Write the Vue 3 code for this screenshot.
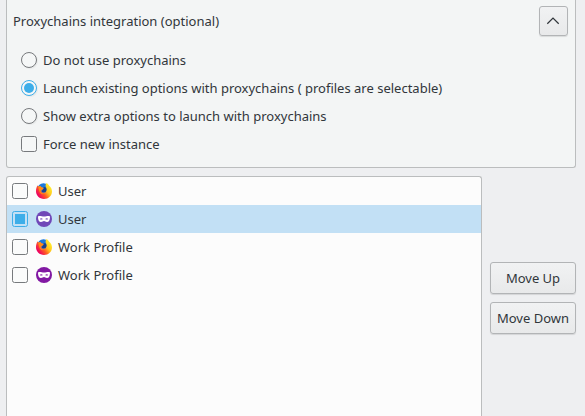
<script setup>
import { ref } from 'vue'

const modes = [
  'Do not use proxychains',
  'Launch existing options with proxychains ( profiles are selectable)',
  'Show extra options to launch with proxychains',
]
const mode = ref(1)
const force = ref(false)
const profiles = ref([
  { name: 'User', icon: 'firefox', checked: false },
  { name: 'User', icon: 'mask', color: '#7048b8', checked: true },
  { name: 'Work Profile', icon: 'firefox', checked: false },
  { name: 'Work Profile', icon: 'mask', color: '#8219a3', checked: false },
])
const current = ref(1)
</script>

<template>
  <main class="page">
    <section class="panel">
      <header class="head">
        <span>Proxychains integration (optional)</span>
        <button class="btn toggle">
          <svg width="15" height="10" viewBox="0 0 15 10"><path d="M1.300 7.800 7 2.100 12.700 7.800" fill="none" stroke="#31363b" stroke-width="1.250" /></svg>
        </button>
      </header>
      <div v-for="(m, i) in modes" :key="m" class="option" @click="mode = i">
        <span class="radio" :class="{ on: mode === i }"></span>{{ m }}
      </div>
      <div class="option" @click="force = !force">
        <span class="check" :class="{ on: force }"></span>Force new instance
      </div>
    </section>

    <div class="lower">
      <ul class="list">
        <li v-for="(p, i) in profiles" :key="i" class="row" :class="{ selected: current === i }" @click="current = i">
          <span class="check" :class="{ on: p.checked }" @click.stop="p.checked = !p.checked"></span>
          <svg v-if="p.icon === 'firefox'" class="icon" viewBox="0 0 16 16">
            <defs>
              <linearGradient :id="'fox' + i" x1=".9" y1=".15" x2=".1" y2=".75">
                <stop offset="0" stop-color="#fff22e" />
                <stop offset=".38" stop-color="#ffc41e" />
                <stop offset=".65" stop-color="#ff5a24" />
                <stop offset="1" stop-color="#ed0062" />
              </linearGradient>
            </defs>
            <circle cx="7.500" cy="6.500" r="6.200" fill="#1a78dc" />
            <path fill="#17408c" d="M6.500 5 9 4 11 6 10 9.500 6 9Z" />
            <path :fill="`url(#fox${i})`" d="M10.700 0C12 .9 12.600 1.800 12.900 2.600 14.800 4 16 6.200 16 8.500 16 12.700 12.500 16 8 16S0 12.700 0 8.300C0 6 .6 4 1.600 2.300L2.100 3.800C2.700 3.200 3.500 2.900 4.500 2.900 4.600 3.600 5.200 4.200 6 4.400L7.600 5C7.500 5.900 6.300 6.300 6 7L5 7.500C5.500 9.300 7 10 8.300 9.700 9.300 9.400 9.800 9.100 10 8.600 10.900 7.400 10.900 5.600 10.100 4.400 9.200 2.800 9.500 1 10.700 0Z" />
            <path fill="#ff8b18" d="M2.100 3.800C2.900 3.100 3.600 2.900 4.500 2.900 4.600 3.600 5.200 4.200 6 4.400L7.600 5C7.500 5.900 6.300 6.300 6 7L4.500 7.700C5 10.300 7.200 11.300 9.800 9.800 7.500 12.500 3.700 11 3.300 8Z" />
          </svg>
          <svg v-else class="icon" viewBox="0 0 16 16">
            <circle cx="8" cy="8" r="8" :fill="p.color" />
            <path fill="#fff" fill-rule="evenodd" d="M2 6C2 5.200 2.500 5 3.300 5 5.300 5 6.500 5.500 8 5.500S10.700 5 12.700 5C13.500 5 14 5.200 14 6 14 9 12.900 11 11 11 9.500 11 9 10 8 10S6.500 11 5 11C3.100 11 2 9 2 6ZM3.800 8Q5.300 9 6.800 8 5.200 6.600 3.800 8ZM9.200 8Q10.700 9 12.200 8 10.800 6.600 9.200 8Z" />
          </svg>
          <span class="name">{{ p.name }}</span>
        </li>
      </ul>
      <div class="actions">
        <button class="btn">Move Up</button>
        <button class="btn">Move Down</button>
      </div>
    </div>
  </main>
</template>

<style>
body { margin: 0; background: #eff0f1; }
</style>

<style scoped>
.page {
  box-sizing: border-box;
  height: 416px;
  padding: 0 9px 0 6px;
  overflow: hidden;
  display: flex;
  flex-direction: column;
  background: #eeeff1;
  color: #31363b;
  font: 13px/20px "Noto Sans", sans-serif;
  white-space: nowrap;
}
.panel {
  box-sizing: border-box;
  height: 168px;
  flex: none;
  border: 1px solid #bbbdbe;
  border-top: 0;
  border-radius: 0 0 3px 3px;
  background: #f3f5f5;
}
.head {
  display: flex;
  justify-content: space-between;
  align-items: center;
  height: 30px;
  padding: 6px 7px 10px 6px;
}
.option {
  display: flex;
  align-items: center;
  gap: 6px;
  height: 28px;
  padding-left: 14px;
}
.radio, .check {
  box-sizing: border-box;
  flex: none;
  width: 16px;
  height: 16px;
  border: 1px solid #777a7d;
  border-radius: 2.5px;
  background: #fafbfb;
  background-clip: padding-box;
}
.option .radio, .option .check { background-color: #f5f7f7; }
.radio { border-radius: 50%; box-shadow: 1px 1px 1px #0000000c; }
.on { border-color: #3daee9; padding: 2px; }
.on::before {
  content: "";
  display: block;
  width: 10px;
  height: 10px;
  background: #3daee9;
}
.radio.on::before { border-radius: 50%; }
.row .check.on { background-color: #c2e0f5; }
.lower {
  flex: 1;
  min-height: 0;
  display: flex;
  gap: 8px;
  margin-top: 8px;
}
.list {
  box-sizing: border-box;
  width: 476px;
  margin: 0;
  padding: 0;
  list-style: none;
  border: 1px solid #bbbdbe;
  border-bottom: 0;
  border-radius: 3px 3px 0 0;
  background: #fcfcfc;
}
.row {
  display: flex;
  align-items: center;
  height: 28px;
  padding-left: 5px;
}
.selected { background: #c2e0f5; }
.icon { width: 16px; height: 16px; margin: 0 6px 0 8px; }
.actions {
  flex: 1;
  display: flex;
  flex-direction: column;
  gap: 8px;
  padding-top: 86px;
}
.btn {
  box-sizing: border-box;
  height: 32px;
  padding: 0;
  border: 1px solid #b2b4b6;
  border-radius: 3px;
  background: linear-gradient(#f1f2f3, #e8e9ea);
  box-shadow: 0 1px 1px #0000001c;
  color: inherit;
  font: inherit;
}
.toggle {
  display: flex;
  align-items: center;
  justify-content: center;
  width: 29px;
  height: 30px;
}
</style>
